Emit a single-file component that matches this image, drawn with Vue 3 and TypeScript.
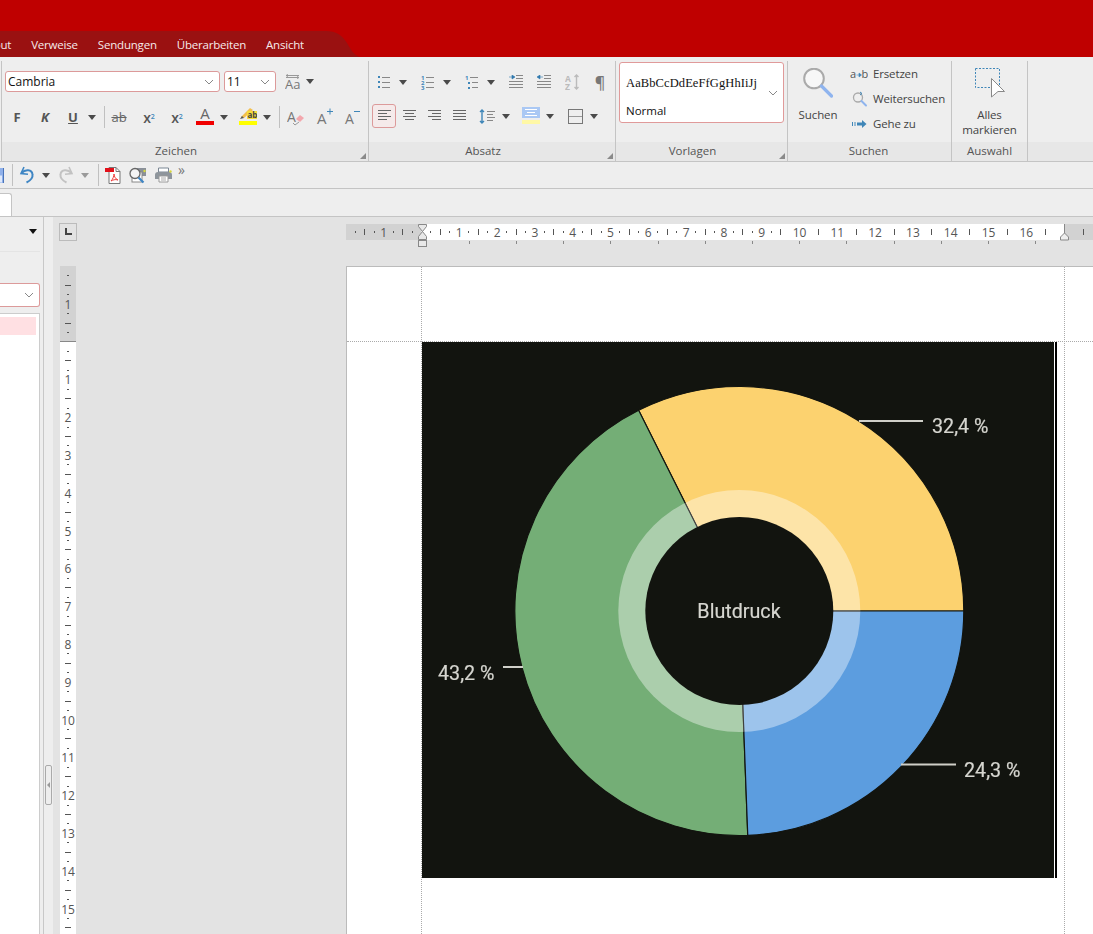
<template>
  <div class="app">
    <!-- title bar + menu tabs -->
    <header class="titlebar"></header>
    <nav class="menubar">
      <svg class="menu-shape" width="360" height="26" viewBox="0 0 360 26">
        <path d="M0 0H326C336 0 342 4 347 12C351 19 354 24 360 26H0Z" fill="#9a1111" />
      </svg>
      <div class="menu-tabs">
        <span v-for="tab in menuTabs" :key="tab">{{ tab }}</span>
      </div>
    </nav>

    <!-- ribbon -->
    <section class="ribbon">
      <div class="group zeichen">
        <div class="group-body">
          <div class="row font-row">
            <div class="select font-select">
              <span>Cambria</span>
              <svg width="10" height="6" viewBox="0 0 10 6"><path d="M1 1l4 4 4-4" class="chev" /></svg>
            </div>
            <div class="select size-select">
              <span>11</span>
              <svg width="10" height="6" viewBox="0 0 10 6"><path d="M1 1l4 4 4-4" class="chev" /></svg>
            </div>
            <svg class="aa" width="16" height="16" viewBox="0 0 16 16">
              <path d="M1 3.5h13M1 1.5h13" stroke="#999" fill="none" />
              <path d="M3 .5L1 1.5l2 1M12 2.5l2 1-2 1" stroke="#999" fill="none" />
              <text x="0" y="15" class="aa-text">Aa</text>
            </svg>
            <i class="caret aa-caret"></i>
          </div>
          <div class="row tool-row">
            <span class="tb glyph bold">F</span>
            <span class="tb glyph bold italic">K</span>
            <span class="tb glyph bold under">U</span>
            <span class="cr"><i class="caret"></i></span>
            <i class="sep s7"></i>
            <span class="tb glyph strike">ab</span>
            <span class="tb glyph bold small ml2">x<sub class="blue">2</sub></span>
            <span class="tb glyph bold small">x<sup class="blue">2</sup></span>
            <span class="tb bar-btn">
              <span class="bar-letter">A</span>
              <i class="bar red"></i>
            </span>
            <span class="cr"><i class="caret"></i></span>
            <span class="tb bar-btn ml5">
              <svg class="pen" width="18" height="13" viewBox="0 0 18 13">
                <path d="M2 10l9-9 3 2-9 8z" fill="#f4c04e" />
                <path d="M1 12l2-3 2 2z" fill="#555" />
                <rect x="8" y="4" width="10" height="8" fill="#f5dc3c" />
                <text x="8.5" y="11" class="pen-text">ab</text>
              </svg>
              <i class="bar yellow"></i>
            </span>
            <span class="cr"><i class="caret"></i></span>
            <i class="sep s7"></i>
            <span class="tb clear-btn ml2">
              <svg width="18" height="18" viewBox="0 0 18 18">
                <text x="0" y="14" class="a-text">A</text>
                <path d="M9 11l4-4 4 3-4 4z" fill="#f3a7ad" />
                <path d="M6 15l2 2 4-3" stroke="#999" fill="none" />
              </svg>
            </span>
            <span class="tb">
              <svg width="18" height="18" viewBox="0 0 18 18">
                <text x="2" y="16" class="a-text big">A</text>
                <path d="M12 3.5h6M15 .5v6" stroke="#3f86b8" fill="none" />
              </svg>
            </span>
            <span class="tb">
              <svg width="18" height="18" viewBox="0 0 18 18">
                <text x="2" y="16" class="a-text">A</text>
                <path d="M11 3.5h6" stroke="#3f86b8" fill="none" />
              </svg>
            </span>
          </div>
        </div>
        <div class="group-label launch">Zeichen<i class="launcher"></i></div>
      </div>

      <div class="group absatz">
        <div class="group-body">
          <div class="row para-row">
            <span class="split">
              <span class="tb">
                <svg width="14" height="14" viewBox="0 0 14 14">
                  <path d="M1 1h2v2H1zM1 6h2v2H1zM1 11h2v2H1z" fill="#3f86b8" />
                  <path d="M5 2.5h8M5 7.5h8M5 12.5h8" class="ln" />
                </svg>
              </span>
              <span class="cr"><i class="caret"></i></span>
            </span>
            <span class="split">
              <span class="tb">
                <svg width="14" height="15" viewBox="0 0 14 15">
                  <text x="0" y="5" class="tiny">1</text>
                  <text x="0" y="10" class="tiny">2</text>
                  <text x="0" y="15" class="tiny">3</text>
                  <path d="M5 2.5h8M5 7.5h8M5 12.5h8" class="ln" />
                </svg>
              </span>
              <span class="cr"><i class="caret"></i></span>
            </span>
            <span class="split">
              <span class="tb">
                <svg width="14" height="15" viewBox="0 0 14 15">
                  <text x="0" y="5" class="tiny">1</text>
                  <path d="M3 7h2v2H3zM3 12h2v2H3z" fill="#3f86b8" />
                  <path d="M5 2.5h8M7 7.5h6M7 12.5h6" class="ln" />
                </svg>
              </span>
              <span class="cr"><i class="caret"></i></span>
            </span>
            <span class="tb">
              <svg width="16" height="14" viewBox="0 0 16 14">
                <path d="M8 .5h7M8 3.5h7M1 6.5h14M1 9.5h14M1 12.5h14" class="ln" />
                <path d="M1 2h3M4 0l3 2-3 2z" fill="#2d77ad" stroke="#2d77ad" stroke-width=".6" />
              </svg>
            </span>
            <span class="tb">
              <svg width="16" height="14" viewBox="0 0 16 14">
                <path d="M8 .5h7M8 3.5h7M1 6.5h14M1 9.5h14M1 12.5h14" class="ln" />
                <path d="M7 2H4M4 0L1 2l3 2z" fill="#2d77ad" stroke="#2d77ad" stroke-width=".6" />
              </svg>
            </span>
            <span class="tb">
              <svg width="15" height="16" viewBox="0 0 15 16">
                <text x="0" y="7.5" class="az">A</text>
                <text x="0" y="15.5" class="az">Z</text>
                <path d="M11.5 1v14M9.5 3l2-2 2 2M9.5 13l2 2 2-2" stroke="#bbb" stroke-width="1.4" fill="none" />
              </svg>
            </span>
            <span class="tb pilcrow">¶</span>
          </div>
          <div class="row para-row second">
            <span class="tb n active">
              <svg width="13" height="12" viewBox="0 0 13 12"><path d="M0 .5h13M0 3.5h9M0 6.5h13M0 9.5h9" class="ln dark" /></svg>
            </span>
            <span class="tb n">
              <svg width="13" height="12" viewBox="0 0 13 12"><path d="M0 .5h13M2 3.5h9M0 6.5h13M2 9.5h9" class="ln dark" /></svg>
            </span>
            <span class="tb n">
              <svg width="13" height="12" viewBox="0 0 13 12"><path d="M0 .5h13M4 3.5h9M0 6.5h13M4 9.5h9" class="ln dark" /></svg>
            </span>
            <span class="tb n">
              <svg width="13" height="12" viewBox="0 0 13 12"><path d="M0 .5h13M0 3.5h13M0 6.5h13M0 9.5h13" class="ln dark" /></svg>
            </span>
            <span class="tb w29">
              <svg width="16" height="15" viewBox="0 0 16 15">
                <path d="M3 1v13M1 3l2-2 2 2M1 12l2 2 2-2" stroke="#3f86b8" stroke-width="1.4" fill="none" />
                <path d="M8 2.5h8M8 5.5h6M8 8.5h8M8 11.5h6" class="ln" />
              </svg>
            </span>
            <span class="cr"><i class="caret"></i></span>
            <span class="tb ml6">
              <svg width="18" height="18" viewBox="0 0 18 18">
                <rect width="18" height="11" fill="#aac8f4" />
                <rect y="13" width="18" height="4" fill="#fff8a6" />
                <path d="M3 2.5h12M5 5.5h8M3 8.5h12" stroke="#fff" fill="none" />
              </svg>
            </span>
            <span class="cr"><i class="caret"></i></span>
            <span class="tb ml6">
              <svg width="15" height="15" viewBox="0 0 15 15">
                <rect x=".5" y=".5" width="14" height="14" fill="none" stroke="#777" />
                <path d="M1 7.5h13" stroke="#999" fill="none" />
              </svg>
            </span>
            <span class="cr"><i class="caret"></i></span>
          </div>
        </div>
        <div class="group-label launch">Absatz<i class="launcher"></i></div>
      </div>

      <div class="group vorlagen">
        <div class="group-body">
          <div class="styles">
            <div class="style-col">
              <span class="style-sample">AaBbCcDdEeFfGgHhIiJj</span>
              <span class="style-name">Normal</span>
            </div>
            <svg width="10" height="6" viewBox="0 0 10 6"><path d="M1 1l4 4 4-4" class="chev" /></svg>
          </div>
        </div>
        <div class="group-label launch">Vorlagen<i class="launcher"></i></div>
      </div>

      <div class="group suchen">
        <div class="group-body find-body">
          <div class="large-btn find-btn">
            <svg width="30" height="30" viewBox="0 0 30 30">
              <circle cx="11" cy="10.5" r="9.8" fill="#f7f7f7" stroke="#aaa" stroke-width="2" />
              <path d="M18.5 18l10 10" stroke="#8fb4ee" stroke-width="3.2" stroke-linecap="round" />
            </svg>
            <span>Suchen</span>
          </div>
          <div class="find-list">
            <div class="find-row">
              <svg width="18" height="12" viewBox="0 0 18 12">
                <text x="0" y="10" class="ab-text">a</text>
                <text x="11.5" y="10" class="ab-text">b</text>
                <path d="M6.5 7h4M9 5l2.5 2L9 9z" fill="#3f86b8" stroke="#3f86b8" stroke-width=".6" />
              </svg>
              <span>Ersetzen</span>
            </div>
            <div class="find-row">
              <svg width="18" height="16" viewBox="0 0 18 16">
                <circle cx="8" cy="6.5" r="4.5" fill="none" stroke="#aaa" stroke-width="1.3" />
                <path d="M11.5 10l4.5 4.5" stroke="#8fb4ee" stroke-width="2" stroke-linecap="round" />
                <path d="M10 1l2 1.5-2 1.5" stroke="#3f86b8" fill="none" />
              </svg>
              <span>Weitersuchen</span>
            </div>
            <div class="find-row">
              <svg width="18" height="10" viewBox="0 0 18 10">
                <path d="M2.5 3v4M5 3v4" stroke="#3f86b8" fill="none" />
                <path d="M7 3.5h5V1l4.5 4-4.5 4V6.5H7z" fill="#3f86b8" />
              </svg>
              <span>Gehe zu</span>
            </div>
          </div>
        </div>
        <div class="group-label find-label">Suchen</div>
      </div>

      <div class="group auswahl">
        <div class="group-body">
          <div class="large-btn select-btn">
            <svg width="32" height="30" viewBox="0 0 32 30">
              <rect x="1.5" y=".5" width="24" height="19" fill="none" stroke="#3f86b8" stroke-dasharray="2 1.5" />
              <path d="M17.5 10.5L30.5 23.5H24L17.5 29Z" fill="#fff" stroke="#888" />
            </svg>
            <span>Alles<br />markieren</span>
          </div>
        </div>
        <div class="group-label">Auswahl</div>
      </div>

      <div class="group rest">
        <div class="group-body"></div>
        <div class="group-label"></div>
      </div>
    </section>

    <!-- quick access -->
    <section class="quick">
      <svg class="qa-save" width="4" height="15" viewBox="0 0 4 15">
        <rect width="4" height="15" fill="#8fb0ea" />
        <path d="M0 7.5h2v7H0z" fill="#dfe9fb" />
        <path d="M3.5 0v15" stroke="#4a74b8" fill="none" />
      </svg>
      <i class="sep qa-first"></i>
      <svg class="qa-undo" width="16" height="18" viewBox="0 0 16 18">
        <path d="M5 1L2 7.5l7 .8" fill="none" stroke="#3f86c4" stroke-width="1.6" />
        <path d="M2.5 7C6 3 13 3 13.5 8.5C14 12 10.5 15 7.5 16.5" fill="none" stroke="#3f86c4" stroke-width="2" />
      </svg>
      <i class="caret qa-caret"></i>
      <svg class="qa-redo" width="16" height="18" viewBox="0 0 16 18">
        <path d="M11 1l3 6.5-7 .8" fill="none" stroke="#c2c2c2" stroke-width="1.6" />
        <path d="M13.5 7C10 3 3 3 2.5 8.5C2 12 5.5 15 8.5 16.5" fill="none" stroke="#c2c2c2" stroke-width="2" />
      </svg>
      <i class="caret qa-caret light"></i>
      <i class="sep qa-second"></i>
      <svg class="qa-pdf" width="16" height="17" viewBox="0 0 16 17">
        <path d="M4 .5h7l4 4v12H4z" fill="#fff" stroke="#777" />
        <path d="M11 .5v4h4" fill="none" stroke="#777" />
        <rect y="1" width="9" height="4" fill="#e2101a" />
        <path d="M6 14c2-2 3-5 3-7 0 3 2 5 4 6-3-1-5 0-7 1z" fill="none" stroke="#ee3b3b" />
      </svg>
      <svg class="qa-preview" width="19" height="17" viewBox="0 0 19 17">
        <rect x="6" y="1" width="12" height="8" fill="#8a9099" />
        <rect x="4" y="5" width="10" height="10" fill="#fff" stroke="#888" />
        <circle cx="7" cy="6.5" r="5" fill="#f4f4f4" stroke="#666" stroke-width="1.3" />
        <path d="M10.5 10.5l5 5" stroke="#3f86c4" stroke-width="2.2" />
        <circle cx="16.5" cy="4" r="1.2" fill="#d8d83c" />
      </svg>
      <svg class="qa-print" width="19" height="17" viewBox="0 0 19 17">
        <path d="M4.5 1h10v4h-10z" fill="#fff" stroke="#7b8794" />
        <path d="M1 8c0-2 1-3 3-3h11c2 0 3 1 3 3v4H1z" fill="#8e959c" />
        <path d="M5 9h9v6H5z" fill="#fff" stroke="#999" />
        <path d="M7 11h5M7 13h5" stroke="#aaa" />
        <circle cx="16.5" cy="4.5" r="1.2" fill="#d8d83c" />
      </svg>
      <span class="qa-more">»</span>
    </section>

    <!-- document tabs -->
    <section class="doc-tabs">
      <div class="doc-tab"></div>
    </section>

    <main class="main">
      <aside class="side-panel">
        <div class="panel-head"><i class="caret black"></i></div>
        <div class="panel-select">
          <svg width="10" height="6" viewBox="0 0 10 6"><path d="M1 1l4 4 4-4" class="chev" /></svg>
        </div>
        <div class="panel-list">
          <div class="panel-item"></div>
        </div>
      </aside>

      <div class="splitter">
        <div class="split-handle"><i></i></div>
      </div>

      <div class="workspace">
        <div class="ruler-row">
          <div class="ruler-corner">
            <svg width="8" height="8" viewBox="0 0 8 8"><path d="M1 0h2v5h5v2H1z" fill="#444" /></svg>
          </div>
          <svg class="hruler" width="747" height="26" viewBox="0 0 747 26">
            <rect width="747" height="16" fill="#d2d2d2" />
            <rect :x="hZero" width="642.5" height="16" fill="#fff" />
            <rect
              v-for="t in hTicks"
              :key="t.k"
              :x="t.pos"
              :y="t.long ? 5 : 7"
              width="1"
              :height="t.long ? 6 : 2"
              fill="#555"
            />
            <text v-for="n in hNumbers" :key="n.k" :x="n.pos" y="13" class="ruler-num">{{ n.label }}</text>
            <rect v-for="(x, i) in tabStops" :key="i" :x="x" y="17" width="1" height="3" fill="#888" />
            <path d="M72.5 .5h8v2l-4 5-4-5zM76.5 7.5l4 5v3h-8v-3z" fill="#e8e8e8" stroke="#888" />
            <rect x="72.5" y="16.5" width="8" height="6" fill="#e8e8e8" stroke="#888" />
            <path d="M718.5 0v9M718.5 9l4 4v3h-8v-3z" fill="#eee" stroke="#888" />
          </svg>
        </div>

        <div class="doc-row">
          <svg class="vruler" width="16" height="668" viewBox="0 0 16 668">
            <rect width="16" height="668" fill="#fff" />
            <rect width="16" height="76" fill="#d2d2d2" />
            <rect y="75" width="16" height="1" fill="#888" />
            <rect
              v-for="t in vTicks"
              :key="t.k"
              :x="t.long ? 5 : 7"
              :y="t.pos"
              :width="t.long ? 6 : 2"
              height="1"
              fill="#555"
            />
            <text v-for="n in vNumbers" :key="n.k" x="8" :y="n.pos" class="ruler-num">{{ n.label }}</text>
          </svg>

          <div class="page">
            <i class="guide-h"></i>
            <div class="text-col">
              <div class="figure">
                <svg class="chart" width="632" height="536" viewBox="0 0 632 536">
                  <path v-for="s in slices" :key="s.name" :d="s.d" :fill="s.color" stroke="#12140f" stroke-width="1.2" />
                  <circle :cx="cx" :cy="cy" r="121" fill="#fff" fill-opacity="0.4" />
                  <path v-for="s in slices" :key="s.name + 'edge'" :d="s.edge" stroke="#12140f" stroke-opacity="0.55" fill="none" />
                  <circle :cx="cx" :cy="cy" r="94" fill="#12140f" />
                  <path d="M437 79h64M81 325h20M479 422.5h55" stroke="#cfcfc8" stroke-width="2" fill="none" />
                  <text x="317" y="276" text-anchor="middle" class="chart-text">Blutdruck</text>
                  <text x="510" y="91" class="chart-text">32,4 %</text>
                  <text x="16" y="338" class="chart-text">43,2 %</text>
                  <text x="542" y="435" class="chart-text">24,3 %</text>
                </svg>
              </div>
            </div>
          </div>
        </div>
      </div>
    </main>
  </div>
</template>

<script setup lang="ts">
const menuTabs = ['Layout', 'Verweise', 'Sendungen', 'Überarbeiten', 'Ansicht']

// ruler geometry, one cm is 37.8px on screen
const CM = 37.8
const hZero = 75.5
const vZero = 76

interface Tick {
  k: number
  pos: number
  long: boolean
}

// dotsUntil: the small dots stop where the numbers get two digits wide
function buildTicks(zero: number, from: number, to: number, dotsUntil = Infinity): Tick[] {
  const ticks: Tick[] = []
  for (let k = from; k <= to; k++) {
    if (k % 4 === 0) continue
    const long = Math.abs(k % 4) === 2
    if (!long && k > dotsUntil) continue
    ticks.push({ k, pos: Math.round(zero + (k * CM) / 4 - 0.5), long })
  }
  return ticks
}

function buildNumbers(zero: number, from: number, to: number) {
  const list = []
  for (let k = from; k <= to; k++) {
    if (k === 0) continue
    list.push({ k, pos: zero + k * CM, label: String(Math.abs(k)) })
  }
  return list
}

const hTicks = buildTicks(hZero, -7, 70, 37)
const hNumbers = buildNumbers(hZero, -1, 16)
const tabStops = Array.from({ length: 13 }, (_, i) => Math.round(hZero + (i + 1) * 47.2))

const vTicks = buildTicks(vZero, -7, 63)
// baseline sits under the tick line
const vNumbers = buildNumbers(vZero + 4.5, -1, 15)

// pie chart, values from the labels
const cx = 317.3
const cy = 269
const R = 224.5

function point(deg: number, r: number) {
  const a = (deg * Math.PI) / 180
  return { x: cx + r * Math.cos(a), y: cy - r * Math.sin(a) }
}

function slice(name: string, color: string, start: number, end: number) {
  const a = point(start, R)
  const b = point(end, R)
  const large = end - start > 180 ? 1 : 0
  const inner = point(start, 121)
  return {
    name,
    color,
    d: `M${cx} ${cy}L${a.x} ${a.y}A${R} ${R} 0 ${large} 0 ${b.x} ${b.y}Z`,
    edge: `M${cx} ${cy}L${inner.x} ${inner.y}`,
  }
}

const yellowEnd = 32.4 * 3.6
const greenEnd = yellowEnd + 43.2 * 3.6

const slices = [
  slice('yellow', '#fcd26f', 0, yellowEnd),
  slice('green', '#74ae76', yellowEnd, greenEnd),
  slice('blue', '#5c9ddf', greenEnd, 360),
]
</script>

<style scoped>
.app {
  width: 1093px;
  height: 934px;
  overflow: hidden;
  display: flex;
  flex-direction: column;
  background: #eee;
  font-family: "Open Sans", "Liberation Sans", sans-serif;
  font-size: 11.5px;
  color: #444;
}

.titlebar {
  height: 31px;
  flex: none;
  background: #bf0000;
}

.menubar {
  height: 26px;
  flex: none;
  background: #bf0000;
  position: relative;
}

.menu-shape {
  position: absolute;
  left: 0;
  top: 0;
}

.menu-tabs {
  position: relative;
  width: 304px;
  height: 26px;
  display: flex;
  justify-content: flex-end;
  align-items: center;
  gap: 20px;
  color: #f6eaea;
  overflow: hidden;
  white-space: nowrap;
  letter-spacing: -0.2px;
}

.menu-tabs span {
  flex: none;
}

.ribbon {
  height: 105px;
  flex: none;
  display: flex;
  padding: 4px 0 0 1px;
  box-sizing: border-box;
  border-bottom: 1px solid #c4c4c4;
}

.group {
  display: flex;
  flex-direction: column;
  box-sizing: border-box;
  border-right: 1px solid #c4c4c4;
  flex: none;
}

.group-body {
  flex: 1;
  min-height: 0;
}

.group-label {
  height: 19px;
  flex: none;
  background: #e7e7e7;
  text-align: center;
  line-height: 17px;
  color: #555;
  position: relative;
}

.group-label.launch {
  padding-right: 18px;
}

.group-label.find-label {
  padding-right: 2px;
}

.launcher {
  position: absolute;
  right: 2px;
  bottom: 2px;
  width: 0;
  height: 0;
  border-left: 6px solid transparent;
  border-bottom: 6px solid #8a8a8a;
}

.zeichen {
  width: 368px;
  border-left: 1px solid #c4c4c4;
}

.absatz {
  width: 247px;
}

.vorlagen {
  width: 172px;
}

.suchen {
  width: 164px;
}

.auswahl {
  width: 76px;
}

.rest {
  flex: 1;
  border-right: 0;
}

.row {
  display: flex;
  align-items: center;
}

.font-row {
  height: 21px;
  margin: 10px 0 0 3px;
}

.tool-row {
  height: 28px;
  margin: 11px 0 0 1px;
}

.select {
  height: 21px;
  box-sizing: border-box;
  border: 1px solid #dc9a9a;
  border-radius: 3px;
  background: #fff;
  display: flex;
  align-items: center;
  justify-content: space-between;
  padding: 0 5px 0 2px;
  color: #111;
  font-size: 12px;
}

.font-select {
  width: 215px;
}

.size-select {
  width: 52px;
  margin-left: 4px;
}

.aa {
  margin-left: 9px;
}

.aa-text {
  font-size: 13px;
  fill: #777;
}

.aa-caret {
  margin-left: 5px;
}

.chev {
  fill: none;
  stroke: #888;
}

.tb {
  width: 28px;
  height: 24px;
  flex: none;
  display: flex;
  align-items: center;
  justify-content: center;
  box-sizing: border-box;
}

.tb.n {
  width: 25px;
}

.tb.w29 {
  width: 29px;
}

.tb.active {
  width: 24px;
  margin-right: 1px;
  border: 1px solid #dc9a9a;
  border-radius: 3px;
  background: #f5eaea;
}

.cr {
  width: 10px;
  flex: none;
  display: flex;
  justify-content: center;
}

.caret {
  display: block;
  flex: none;
  width: 0;
  height: 0;
  border-top: 5px solid #4a4a4a;
  border-left: 4px solid transparent;
  border-right: 4px solid transparent;
}

.caret.light {
  border-top-color: #9a9a9a;
}

.caret.black {
  border-top-color: #111;
}

.sep {
  display: block;
  flex: none;
  width: 1px;
  height: 22px;
  background: #c0c0c0;
}

.s7 {
  margin-left: 7px;
}

.ml2 {
  margin-left: 2px;
}

.ml5 {
  margin-left: 5px;
}

.ml6 {
  margin-left: 6px;
}

.glyph {
  font-size: 13px;
  color: #555;
}

.bold {
  font-weight: 700;
}

.italic {
  font-style: italic;
}

.under {
  text-decoration: underline;
}

.strike {
  text-decoration: line-through;
  color: #666;
}

.small {
  font-size: 14px;
  font-weight: 600;
}

.small sub,
.small sup {
  font-size: 7px;
  line-height: 0;
}

.blue {
  color: #3f86b8;
}

.bar-btn {
  flex-direction: column;
  justify-content: flex-end;
  height: 24px;
  padding-bottom: 4px;
}

.bar-letter {
  font-size: 15px;
  line-height: 16px;
  color: #666;
}

.bar {
  display: block;
  width: 18px;
  height: 4px;
  flex: none;
}

.bar.red {
  background: #f00000;
}

.bar.yellow {
  background: #ffff00;
}

.pen {
  flex: none;
  margin-bottom: 1px;
}

.pen-text {
  font-size: 8px;
  font-weight: 700;
  fill: #444;
}

.a-text {
  font-size: 14px;
  fill: #777;
}

.a-text.big {
  font-size: 15px;
}

.para-row {
  height: 24px;
  margin: 9px 0 0 1px;
}

.para-row.second {
  margin: 10px 0 0 3px;
}

.split {
  width: 44px;
  flex: none;
  display: flex;
  align-items: center;
}

.ln {
  fill: none;
  stroke: #888;
}

.ln.dark {
  stroke: #666;
}

.tiny {
  font-size: 6px;
  font-weight: 700;
  fill: #3f86b8;
}

.az {
  font-size: 8.5px;
  font-weight: 700;
  fill: #bbb;
}

.pilcrow {
  font-size: 16px;
  font-weight: 600;
  color: #777;
}

.styles {
  width: 165px;
  height: 61px;
  margin: 1px 0 0 3px;
  box-sizing: border-box;
  border: 1px solid #e09a9a;
  border-radius: 3px;
  background: #fff;
  display: flex;
  align-items: center;
  justify-content: space-between;
  padding: 0 5px 0 6px;
}

.style-col {
  display: flex;
  flex-direction: column;
  gap: 12px;
  padding-top: 9px;
  color: #111;
}

.style-sample {
  font-family: "Liberation Serif", serif;
  font-size: 12.5px;
  line-height: 15px;
  letter-spacing: 0.1px;
}

.style-name {
  font-size: 11.5px;
  line-height: 15px;
}

.find-body {
  display: flex;
}

.large-btn {
  display: flex;
  flex-direction: column;
  align-items: center;
  text-align: center;
  line-height: 15px;
  padding-top: 7px;
  box-sizing: border-box;
  letter-spacing: -0.1px;
}

.large-btn span {
  margin-top: 9px;
}

.find-btn {
  width: 60px;
}

.find-list {
  margin-left: 2px;
  letter-spacing: -0.15px;
}

.find-row {
  height: 25px;
  display: flex;
  align-items: center;
  gap: 5px;
  white-space: nowrap;
}

.find-row svg {
  width: 18px;
  flex: none;
}

.ab-text {
  font-size: 11px;
  fill: #555;
}

.quick {
  height: 27px;
  flex: none;
  box-sizing: border-box;
  border-bottom: 1px solid #c4c4c4;
  display: flex;
  align-items: center;
}

.qa-first {
  margin-left: 8px;
}

.qa-undo {
  margin-left: 6px;
}

.qa-caret {
  margin-left: 7px;
}

.qa-redo {
  margin-left: 8px;
}

.qa-caret.light {
  margin-left: 7px;
}

.qa-second {
  margin-left: 9px;
}

.qa-pdf {
  margin-left: 6px;
}

.qa-preview {
  margin-left: 7px;
}

.qa-print {
  margin-left: 7px;
}

.qa-more {
  margin: -11px 0 0 5px;
  font-size: 14px;
  line-height: 14px;
  color: #777;
}

.doc-tabs {
  height: 28px;
  flex: none;
  box-sizing: border-box;
  border-bottom: 1px solid #c4c4c4;
  display: flex;
  align-items: flex-end;
}

.doc-tab {
  width: 12px;
  height: 23px;
  box-sizing: border-box;
  background: #fff;
  border: 1px solid #c4c4c4;
  border-left: 0;
  border-bottom: 0;
  border-top-right-radius: 3px;
}

.main {
  flex: 1;
  min-height: 0;
  display: flex;
}

.side-panel {
  width: 44px;
  flex: none;
  box-sizing: border-box;
  border-right: 1px solid #c8c8c8;
  display: flex;
  flex-direction: column;
  padding-right: 3px;
}

.panel-head {
  height: 35px;
  flex: none;
  box-sizing: border-box;
  border-bottom: 1px solid #e4e4e4;
  display: flex;
  align-items: center;
  justify-content: flex-end;
  padding: 0 3px 6px 0;
}

.panel-select {
  width: 40px;
  height: 24px;
  flex: none;
  margin-top: 31px;
  box-sizing: border-box;
  background: #fff;
  border: 1px solid #dc9a9a;
  border-left: 0;
  border-radius: 0 3px 3px 0;
  display: flex;
  align-items: center;
  justify-content: flex-end;
  padding-right: 5px;
}

.panel-list {
  flex: 1;
  width: 40px;
  margin-top: 6px;
  box-sizing: border-box;
  background: #fff;
  border: 1px solid #ccc;
  border-left: 0;
  border-bottom: 0;
  padding: 3px 3px 0 0;
}

.panel-item {
  height: 18px;
  background: #ffe0e3;
}

.splitter {
  width: 9px;
  flex: none;
  background: #eee;
}

.split-handle {
  width: 7px;
  height: 40px;
  margin: 548px 0 0 1px;
  box-sizing: border-box;
  border: 1px solid #aaa;
  border-radius: 2px;
  display: flex;
  align-items: center;
  justify-content: center;
}

.split-handle i {
  width: 0;
  height: 0;
  border-top: 3px solid transparent;
  border-bottom: 3px solid transparent;
  border-right: 3px solid #999;
}

.workspace {
  flex: 1;
  min-width: 0;
  background: #e3e3e3;
  display: flex;
  flex-direction: column;
}

.ruler-row {
  height: 49px;
  flex: none;
  display: flex;
  align-items: flex-start;
}

.ruler-corner {
  width: 18px;
  height: 18px;
  flex: none;
  margin: 6px 0 0 6px;
  box-sizing: border-box;
  border: 1px solid #bbb;
  display: flex;
  align-items: center;
  justify-content: center;
}

.hruler {
  flex: none;
  margin: 7px 0 0 269px;
  overflow: visible;
}

.ruler-num {
  font-size: 12px;
  fill: #555;
  text-anchor: middle;
}

.doc-row {
  flex: 1;
  min-height: 0;
  display: flex;
}

.vruler {
  flex: none;
  margin-left: 7px;
}

.page {
  flex: 1;
  margin-left: 270px;
  box-sizing: border-box;
  background: #fff;
  border-left: 1px solid #bbb;
  border-top: 1px solid #bbb;
  position: relative;
}

.guide-h {
  position: absolute;
  left: 0;
  right: 0;
  top: 74px;
  border-top: 1px dotted #aaa;
}

.text-col {
  width: 644px;
  height: 100%;
  margin-left: 74px;
  box-sizing: border-box;
  padding-top: 75px;
  border-left: 1px dotted #aaa;
  border-right: 1px dotted #aaa;
}

.figure {
  width: 635px;
  height: 536px;
  box-sizing: border-box;
  background: #fff;
  border-right: 2px solid #000;
  padding-right: 1px;
  display: flex;
}

.chart {
  display: block;
  flex: none;
  background: #12140f;
  filter: blur(0.4px);
}

.chart-text {
  font-family: Roboto, "Liberation Sans", sans-serif;
  font-size: 19.7px;
  fill: #d6d6d0;
  stroke: #d6d6d0;
  stroke-width: 0.2px;
}
</style>

<style>
html,
body {
  margin: 0;
  background: #eee;
}
</style>
